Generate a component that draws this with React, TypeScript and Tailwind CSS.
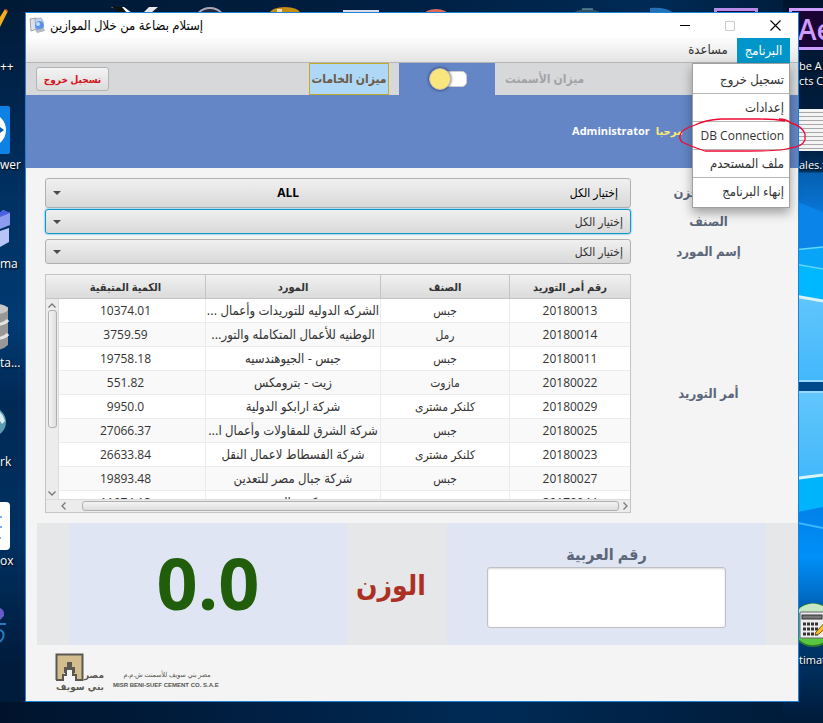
import React from 'react';

type Order = { id: string; item: string; supplier: string; remaining: string };

const orders: Order[] = [
  { id: '20180013', item: 'جبس', supplier: 'الشركه الدوليه للتوريدات وأعمال ...', remaining: '10374.01' },
  { id: '20180014', item: 'رمل', supplier: 'الوطنيه للأعمال المتكامله والتور...', remaining: '3759.59' },
  { id: '20180011', item: 'جبس', supplier: 'جبس - الجيوهندسيه', remaining: '19758.18' },
  { id: '20180022', item: 'مازوت', supplier: 'زيت - بترومكس', remaining: '551.82' },
  { id: '20180029', item: 'كلنكر مشترى', supplier: 'شركة ارابكو الدولية', remaining: '9950.0' },
  { id: '20180025', item: 'جبس', supplier: 'شركة الشرق للمقاولات وأعمال ا...', remaining: '27066.37' },
  { id: '20180023', item: 'كلنكر مشترى', supplier: 'شركة الفسطاط لاعمال النقل', remaining: '26633.84' },
  { id: '20180027', item: 'جبس', supplier: 'شركة جبال مصر للتعدين', remaining: '19893.48' },
  { id: '20170044', item: 'جبس', supplier: 'شركة جبال مصر', remaining: '11974.13' },
];

const menuItems = [
  { label: 'تسجيل خروج', size: 'text-[13px]' },
  { label: 'إعدادات', size: 'text-[13px]' },
  { label: 'DB Connection', size: 'text-xs' },
  { label: 'ملف المستحدم', size: 'text-[13px]' },
  { label: 'إنهاء البرنامج', size: 'text-[13px]' },
];

const leftText = 'absolute left-0 whitespace-nowrap text-xs leading-4 text-white [text-shadow:1px_1px_2px_#000]';
const rightText = 'absolute left-[799px] whitespace-nowrap text-[11px] leading-[15px] text-white [text-shadow:1px_1px_2px_#000]';

function Desktop() {
  return (
    <div className="absolute inset-0 overflow-hidden bg-[linear-gradient(180deg,#001a36_0%,#00234a_12%,#003263_28%,#003a72_45%,#002a56_55%,#003060_75%,#001b3c_92%,#001c3c_100%)]">
      <div className="absolute inset-x-0 top-0 h-3 bg-[linear-gradient(90deg,#001a36,#001d3e_40%,#002a55_80%,#001a36)]" />
      <div className="absolute inset-x-0 bottom-0 h-[21px] bg-[linear-gradient(90deg,#00132b,#001f42_30%,#002a55_60%,#001a36)]" />

      <svg className="absolute top-0 right-0" width="40" height="723" viewBox="0 0 40 723" aria-hidden="true">
        <defs>
          <linearGradient id="sky" x1="0" y1="0" x2="0" y2="1">
            <stop offset="0" stopColor="#00152d" />
            <stop offset=".2" stopColor="#001f42" />
            <stop offset=".237" stopColor="#00305f" />
            <stop offset=".24" stopColor="#0560b0" />
            <stop offset=".3" stopColor="#0a78dc" />
            <stop offset=".34" stopColor="#0090f0" />
            <stop offset=".66" stopColor="#0078e0" />
            <stop offset=".77" stopColor="#0090f8" />
            <stop offset=".82" stopColor="#0070cc" />
            <stop offset=".88" stopColor="#003a72" />
            <stop offset="1" stopColor="#001a38" />
          </linearGradient>
          <linearGradient id="pane" x1="0" y1="0" x2="0" y2="1">
            <stop offset="0" stopColor="#62c6fb" />
            <stop offset="1" stopColor="#42b8fb" />
          </linearGradient>
        </defs>
        <rect width="40" height="723" fill="url(#sky)" />
        <path d="M0 196 40 212V248L0 252Z" fill="#0b84ea" />
        <path d="M0 251 40 247V269L0 262Z" fill="#08a4f8" />
        <path d="M0 262 40 270V300L0 294Z" fill="#00b8ff" />
        <path d="M0 294 40 300V381H0Z" fill="url(#pane)" />
        <path d="M0 251 40 247M0 262 40 269" stroke="#62d8f8" strokeWidth="1.5" />
        <path d="M0 294 40 301" stroke="#d8f4f4" strokeWidth="3" />
        <rect y="380" width="40" height="2" fill="#98d8f8" />
        <rect y="382" width="40" height="10" fill="#004a8c" />
        <rect y="392" width="40" height="88" fill="url(#pane)" />
        <rect y="391" width="40" height="2" fill="#98d8f8" />
        <path d="M0 480 40 475V507L0 515Z" fill="#00b4fc" />
        <path d="M0 480 40 475" stroke="#d8f4f4" strokeWidth="3" />
        <path d="M0 520 40 528" stroke="#38b8f8" strokeWidth="2" />
      </svg>

      <svg className="absolute top-0 left-0" width="720" height="13" viewBox="0 0 720 13" aria-hidden="true">
        <path d="M111 7h13l8 6h-5z" fill="#fff" />
        <path d="M112 7h10l5 6h-7z" fill="#111" />
        <path d="M149 7h9l-7 6h-8z" fill="#e8e8e8" />
        <circle cx="210" cy="24" r="16" fill="#25283c" stroke="#a8a8b8" strokeWidth="2" />
        <ellipse cx="285" cy="13" rx="15" ry="6" fill="#c88c14" />
        <path d="M277 9h5v4h-5z" fill="#f0e0b0" />
        <rect x="343" y="10" width="36" height="3" fill="#dcdce8" />
        <ellipse cx="436" cy="15" rx="12" ry="6" fill="#e06a58" />
        <ellipse cx="587" cy="15" rx="14" ry="6" fill="#31505e" />
        <path d="M582 9h11" stroke="#7ab0b8" />
        <path d="M650 8q16-1 24 5h-24z" fill="#2470b4" />
      </svg>

      <svg className="absolute top-0 left-0" width="25" height="723" viewBox="0 0 25 723" aria-hidden="true">
        <path d="m0 17 5-8 3 2-8 16z" fill="#f2ae1c" />
        <path d="m5 9 2 0 1 3-2-1z" fill="#c42d38" />
        <rect x="-20" y="106" width="30" height="48" rx="2" fill="#0e82e4" />
        <circle cx="-11" cy="130" r="17" fill="#fff" />
        <path d="M-10 129h10v-2l4 3-4 3v-2h-10z" fill="#0b5fb0" />
        <path d="m0 213 3-3 7 3v12L0 229z" fill="#8e9cf0" />
        <path d="m0 231 9-3v14L0 247z" fill="#b8c4f8" />
        <path d="m0 213 3-3 7 3-10 4z" fill="#4a60e0" />
        <path d="M-12 307h20v38q-6 6-20 6z" fill="#989898" />
        <ellipse cx="-4" cy="309" rx="12" ry="5" fill="#c8c8c8" />
        <path d="M-8 325q12 0 16-5M-8 339q12 0 16-5" fill="none" stroke="#e4e4e4" strokeWidth="3" />
        <circle cx="-9" cy="422" r="15" fill="#5c9cb0" />
        <path d="M0 412q4 4 5 9l-3 3-2-3z" fill="#dcecf0" />
        <rect x="-30" y="502" width="40" height="48" rx="4" fill="#fff" />
        <path d="M0 517h2M0 527h2M0 538h1" stroke="#7ab0f0" strokeWidth="2" />
        <path d="M0 608q5 2 4 8l-4 4z" fill="#6a5ac8" />
        <path d="M0 624h6M0 630q5 2 3 8l-3 4" fill="none" stroke="#2878c0" strokeWidth="2" />
      </svg>

      <span className={`${leftText} top-[59px]`}>++</span>
      <span className={`${leftText} top-[157px]`}>wer</span>
      <span className={`${leftText} top-[256px]`}>ma</span>
      <span className={`${leftText} top-[355px]`}>ta...</span>
      <span className={`${leftText} top-[454px]`}>rk</span>
      <span className={`${leftText} top-[553px]`}>ox</span>

      <div className="absolute top-2 right-[65px] h-10 w-11 border-[3px] border-[#b98ae8] bg-[#1a0433]" />
      <div className="absolute top-2 -right-4 flex h-[42px] w-[50px] items-center border-[3px] border-[#cf9cff] bg-[#1a0433] pl-1.5 text-[28px] font-semibold text-[#cf9cff]">
        Ae
      </div>
      <span className={`${rightText} top-[58px]`}>be A</span>
      <span className={`${rightText} top-[73px]`}>cts C</span>
      <div className="absolute top-[109px] -right-2 h-[42px] w-9 bg-[repeating-linear-gradient(180deg,#f4f4f4_0_3px,#a8a8a8_3px_4px)]" />
      <span className={`${rightText} top-[157px]`}>ales.t</span>
      <svg className="absolute top-[602px] -right-3" width="44" height="46" viewBox="0 0 44 46" aria-hidden="true">
        <circle cx="22" cy="23" r="21" fill="#58c840" stroke="#2f7d28" strokeWidth="2" />
        <path d="M5 11a20 20 0 0 1 34 0z" fill="#c8e8c4" />
        <rect x="9" y="10" width="26" height="26" rx="1" fill="#eee" stroke="#666" />
        <rect x="11" y="13" width="20" height="4" fill="#777" stroke="#333" />
        <path d="M12 22h15M12 27h15M12 32h15" stroke="#333" strokeWidth="3" strokeDasharray="3 1" />
        <path d="m25 30 12-13 4 3-13 12-4 1z" fill="#f6be20" stroke="#7a5a10" />
      </svg>
      <span className={`${rightText} top-[652px]`}>timat</span>
    </div>
  );
}

function TitleBar() {
  return (
    <header className="flex h-[25px] items-center bg-white pl-[3px]">
      <svg width="17" height="17" viewBox="0 0 17 17" aria-hidden="true">
        <path d="m1 2 6-1 1 11-6 2z" fill="#dde1e6" stroke="#8b929b" strokeWidth=".8" />
        <path d="m6 2 6-1 2 3v7l-7 2z" fill="#c5d6ee" stroke="#8fa4c4" strokeWidth=".8" />
        <circle cx="10.500" cy="8.500" r="4.500" fill="#5b93ea" />
        <circle cx="9" cy="7" r="2" fill="#c6defc" />
        <path d="m6 13 9-2 1 3-8 2z" fill="#b4bac4" />
      </svg>
      <h1 className="ml-1 text-[13px] text-black" dir="rtl">إستلام بضاعة من خلال الموازين</h1>
      <div className="ml-auto flex h-full">
        <button type="button" aria-label="Minimize" className="flex w-[45px] items-center justify-center">
          <svg width="10" height="11" viewBox="0 0 10 11"><path d="M0 5.500h10" stroke="#000" /></svg>
        </button>
        <button type="button" aria-label="Maximize" disabled className="flex w-[45px] items-center justify-center">
          <svg width="10" height="10" viewBox="0 0 10 10"><path d="M.5.5h9v9h-9z" fill="none" stroke="#ccc" /></svg>
        </button>
        <button type="button" aria-label="Close" className="flex w-[46px] items-center justify-center">
          <svg width="11" height="11" viewBox="0 0 11 11"><path d="m.5.5 10 10m0-10-10 10" stroke="#000" strokeWidth="1.100" /></svg>
        </button>
      </div>
    </header>
  );
}

function MenuBar() {
  return (
    <nav className="relative flex h-[25px] border-b border-[#b5b5b5] bg-linear-to-b from-[#fdfdfd] to-[#e4e4e4] pr-2 text-[13px] text-[#333]" dir="rtl">
      <button type="button" className="-mb-px w-[53px] bg-[#0096c9] text-white">البرنامج</button>
      <button type="button" className="w-[58px]">مساعدة</button>
      <ul className="absolute top-[25px] right-2 z-10 w-[98px] divide-y divide-[#b5b5b5] border border-[#a0a0a0] bg-white shadow-[0_5px_10px_rgba(0,0,0,0.35)]">
        {menuItems.map((item) => (
          <li key={item.label} className="first:pt-0.5 last:pb-0.5">
            <button type="button" className={`block h-[27px] w-full pr-[5px] text-right whitespace-nowrap ${item.size}`}>{item.label}</button>
          </li>
        ))}
      </ul>
      <svg className="pointer-events-none absolute top-[79px] -right-2 z-20" width="128" height="38" viewBox="0 0 128 38" aria-hidden="true">
        <path
          d="M107 4Q97 2 82 2H43Q27 3 17 8Q5 12 3 16Q0 21 4 25Q14 30 27 34H72Q106 34 112 31Q124 30 127 23V17Q124 9 113 6Q108 2 101 2"
          fill="none"
          stroke="#f00a32"
          strokeWidth="1.300"
        />
      </svg>
    </nav>
  );
}

function ScaleSwitch() {
  return (
    <div className="flex h-8 bg-[#6486c6]">
      <div className="flex flex-1 items-center bg-[#d7d8da] pr-2.5 pl-2.5">
        <button type="button" className="h-6 w-[73px] rounded-[3px] border border-[#b4b4b4] bg-linear-to-b from-[#f4f4f4] to-[#dcdcdc] text-[10px] font-bold text-[#d4141c]">
          تسجيل خروج
        </button>
        <span className="ml-auto flex h-8 w-20 items-center justify-center border border-[#c0aa28] bg-[#aed8f6] text-xs font-bold whitespace-nowrap text-[#6b5a48]">
          ميزان الخامات
        </span>
      </div>
      <label className="relative flex w-24 items-center justify-center">
        <input type="checkbox" aria-label="الميزان" className="ml-1 h-4 w-9 appearance-none rounded-[5px] border border-[#ccc] bg-white" />
        <span className="absolute top-[5px] left-[30px] size-[22px] rounded-full border border-[#bcbcc4] bg-[#f9e77d] shadow-[0_0_3px_rgba(0,0,0,0.7)]" />
      </label>
      <div className="flex w-[303px] items-center bg-[#d7d8da] pl-2.5 text-xs font-bold text-[#a3a3a5]">ميزان الأسمنت</div>
    </div>
  );
}

function Combo({ id, extra, className }: { id: string; extra?: string; className: string }) {
  return (
    <div className="relative">
      <select id={id} dir="rtl" className={`block w-full appearance-none rounded-[3px] border bg-linear-to-b from-[#f0f0f0] to-[#d9d9d9] text-xs outline-none ${className}`}>
        <option>إختيار الكل</option>
      </select>
      {extra && (
        <span className="pointer-events-none absolute inset-y-0 right-[332px] flex items-center text-xs font-bold text-black">{extra}</span>
      )}
      <span className="pointer-events-none absolute inset-y-0 left-2 flex items-center">
        <svg width="8" height="4" viewBox="0 0 8 4" aria-hidden="true"><path d="M0 0h8L4 4z" fill="#4a4a4a" /></svg>
      </span>
    </div>
  );
}

function OrdersTable() {
  const head = 'h-6 border-l border-[#c4c4c4] text-[11px] font-bold last:border-l-0';
  const cell = 'h-6 overflow-hidden border-b border-l border-[#ececec] leading-[23px] whitespace-nowrap last:border-l-0';
  return (
    <div className="relative h-[239px] overflow-hidden border border-[#c4c4c4] bg-white">
      <table dir="rtl" className="w-full table-fixed border-separate border-spacing-0 text-center text-xs text-[#333]">
        <colgroup>
          <col className="w-[121px]" />
          <col className="w-[129px]" />
          <col className="w-[175px]" />
          <col />
        </colgroup>
        <thead>
          <tr className="bg-linear-to-b from-[#f1f1f1] to-[#dadada] shadow-[inset_0_-1px_#c4c4c4]">
            <th className={head}>رقم أمر التوريد</th>
            <th className={head}>الصنف</th>
            <th className={head}>المورد</th>
            <th className={head}>الكمية المتبقية</th>
          </tr>
        </thead>
        <tbody>
          {orders.map((order) => (
            <tr key={order.id} className="even:bg-[#f9f9f9]">
              <td className={cell}>{order.id}</td>
              <td className={cell}>{order.item}</td>
              <td className={`${cell} text-[13px]`}>{order.supplier}</td>
              <td className={cell}>{order.remaining}</td>
            </tr>
          ))}
        </tbody>
      </table>
      <div className="absolute top-6 bottom-3 left-0 flex w-[13px] flex-col items-center border-r border-[#dcdcdc] bg-[#ececec] py-1" aria-hidden="true">
        <svg width="8" height="5" viewBox="0 0 8 5"><path d="m.5 4.500 3.500-3.500 3.500 3.500" fill="none" stroke="#777" strokeWidth="1.300" /></svg>
        <div className="mt-0.5 h-[118px] w-[9px] rounded-[3px] border border-[#b0b0b0] bg-linear-to-r from-[#f4f4f4] to-[#dedede]" />
        <svg className="mt-auto" width="8" height="5" viewBox="0 0 8 5"><path d="m.5.5 3.500 3.500 3.500-3.500" fill="none" stroke="#777" strokeWidth="1.300" /></svg>
      </div>
      <div className="absolute inset-x-0 bottom-0 flex h-[13px] items-center border-t border-[#dcdcdc] bg-[#ececec] pr-0.5 pl-[15px]" aria-hidden="true">
        <svg width="5" height="8" viewBox="0 0 5 8"><path d="m4.500.5-3.500 3.500 3.500 3.500" fill="none" stroke="#777" strokeWidth="1.300" /></svg>
        <div className="mr-1 ml-4 h-[10px] flex-1 rounded-[3px] border border-[#b0b0b0] bg-linear-to-b from-[#f4f4f4] to-[#dedede]" />
        <svg width="5" height="8" viewBox="0 0 5 8"><path d="m.5.5 3.500 3.500-3.500 3.500" fill="none" stroke="#777" strokeWidth="1.300" /></svg>
      </div>
    </div>
  );
}

function OrderForm() {
  const label = 'text-center text-[13px] font-bold text-[#5c6779]';
  return (
    <section className="grid grid-cols-[minmax(0,1fr)_155px] items-center pt-2.5 pr-3 pl-[19px]">
      <Combo id="store" extra="ALL" className="h-[30px] border-[#b0b0b0] pr-3 text-black" />
      <label htmlFor="store" className={label}>إسم المخزن</label>
      <div className="pt-px pb-1">
        <Combo id="item" className="h-[25px] border-[#0b98cc] pr-[7px] text-[#333] shadow-[0_0_2px_#0b98cc]" />
      </div>
      <label htmlFor="item" className={`${label} pb-0.5`}>الصنف</label>
      <div className="pt-px pb-2.5">
        <Combo id="supplier" className="h-[25px] border-[#b0b0b0] pr-[7px] text-[#333]" />
      </div>
      <label htmlFor="supplier" className={`${label} pb-2`}>إسم المورد</label>
      <OrdersTable />
      <h2 className={label}>أمر التوريد</h2>
    </section>
  );
}

function WeightPanel() {
  return (
    <section className="mt-2.5 ml-[11px] grid h-[122px] grid-cols-[32px_minmax(0,278fr)_100px_minmax(0,319fr)_32px] bg-[#e6e7e9]">
      <output id="weight" className="col-start-2 flex items-center justify-center bg-[#dfe5f2] pb-1 text-7xl font-bold text-[#215e0c]">0.0</output>
      <label htmlFor="weight" className="flex items-center justify-center pr-3 text-[28px] font-bold text-[#ac3124]">الوزن</label>
      <div className="flex flex-col items-center bg-[#dfe5f2] pt-[18px]">
        <label htmlFor="car" className="text-base leading-[26px] font-bold text-[#5c6779]">رقم العربية</label>
        <input id="car" type="text" dir="rtl" className="h-[61px] w-[239px] rounded-[3px] border border-[#c0c0c4] bg-white px-2 text-lg shadow-[inset_0_1px_2px_rgba(0,0,0,0.15)] outline-none" />
      </div>
    </section>
  );
}

function CompanyLogo() {
  return (
    <footer className="flex items-center gap-2 pt-2 pb-[6px] pl-[29px]">
      <svg width="50" height="42" viewBox="0 0 50 42" aria-hidden="true">
        <path d="M2 2h25v25h-6v-5h-2v-6h-3v-5h-4v5H9v6H7v5H2z" fill="#d3bd8f" />
        <path d="M1.500 27V1.500h26V28M1 27h7v-5h3v-6h7v6h3v5h7" fill="none" stroke="#5b5852" strokeWidth="2" />
        <path d="M12 9h5v5h3v6h-3v-4h-5v4H9v-6h3z" fill="#5b5852" />
        <text x="49" y="25" textAnchor="end" fontFamily="DejaVu Sans" fontSize="9" fontWeight="700" fill="#5b5852">مصر</text>
        <text x="49" y="37" textAnchor="end" fontFamily="DejaVu Sans" fontSize="9" fontWeight="700" fill="#5b5852">بني سويف</text>
      </svg>
      <div className="mt-3 text-[#55554f]">
        <p dir="rtl" className="pr-2 text-[7px] leading-[10px]">مصر بني سويف للأسمنت ش.م.م</p>
        <p className="font-['Liberation_Sans',sans-serif] text-[6px] leading-[10px] font-bold">MISR BENI-SUEF CEMENT CO. S.A.E</p>
      </div>
    </footer>
  );
}

export default function App() {
  return (
    <div className="relative min-h-screen pt-3 pr-6 pb-[21px] pl-[25px] font-['Open_Sans','DejaVu_Sans_Condensed','DejaVu_Sans',sans-serif]">
      <Desktop />
      <main className="relative border border-[#1883d7] bg-[#f4f4f4]">
        <TitleBar />
        <MenuBar />
        <ScaleSwitch />
        <div className="flex h-[73px] items-center justify-end gap-1.5 bg-[#6486c6] pr-[115px] text-[11px] font-bold text-white">
          <span>Administrator</span>
          <span className="text-[#fbe97a]">مرحبا</span>
        </div>
        <OrderForm />
        <WeightPanel />
        <CompanyLogo />
      </main>
    </div>
  );
}
